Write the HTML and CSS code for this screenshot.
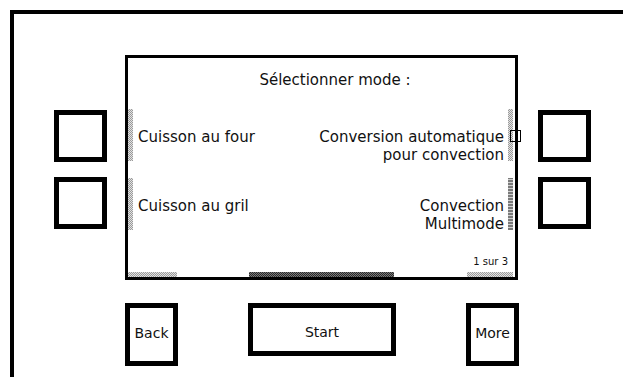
FILE: index.html
```html
<!DOCTYPE html>
<html lang="fr">
<head>
<meta charset="utf-8">
<title>Sélectionner mode</title>
<link rel="stylesheet" href="styles.css">
</head>
<body>
<div class="frame">
  <div class="main">
    <div class="side side-left">
      <div class="key"></div>
      <div class="key"></div>
    </div>
    <div class="screen">
      <div class="title">Sélectionner mode :</div>
      <div class="row row1">
        <div class="item left"><span class="bar"></span><span class="label">Cuisson au four</span></div>
        <div class="item right"><span class="label"><span class="tofu">Conversion automatique</span><br>pour convection</span><span class="bar"></span></div>
      </div>
      <div class="row row2">
        <div class="item left"><span class="bar"></span><span class="label">Cuisson au gril</span></div>
        <div class="item right"><span class="label">Convection<br>Multimode</span><span class="bar bar-dark"></span></div>
      </div>
      <div class="footer">
        <div class="page">1 sur 3</div>
        <div class="bars">
          <span class="hbar b1"></span>
          <span class="hbar b2"></span>
          <span class="hbar b3"></span>
        </div>
      </div>
    </div>
    <div class="side side-right">
      <div class="key"></div>
      <div class="key"></div>
    </div>
  </div>
  <div class="buttons">
    <div class="btn btn-small">Back</div>
    <div class="btn btn-wide">Start</div>
    <div class="btn btn-small">More</div>
  </div>
</div>
</body>
</html>
```

FILE: styles.css
```css
html, body {
  margin: 0;
  padding: 0;
}

body {
  width: 623px;
  height: 377px;
  overflow: hidden;
  background: #fff;
  color: #111;
  font-family: "DejaVu Sans", "Liberation Sans", sans-serif;
}

.frame {
  margin: 10px 0 0 10px;
  width: 613px;
  height: 367px;
  border-top: 4px solid #000;
  border-left: 4px solid #000;
  box-sizing: border-box;
}

.main {
  display: flex;
  align-items: flex-start;
  margin-top: 41px;
  padding-left: 40px;
}

.side {
  display: flex;
  flex-direction: column;
  gap: 15px;
  padding-top: 55px;
  width: 53px;
}

.side-left {
  margin-right: 18px;
}

.side-right {
  margin-left: 20px;
}

.key {
  height: 52px;
  border: 5px solid #000;
  box-sizing: border-box;
}

.screen {
  width: 393px;
  height: 225px;
  border: 3px solid #000;
  box-sizing: border-box;
  display: flex;
  flex-direction: column;
}

.title {
  margin-top: 13px;
  padding-left: 27px;
  font-size: 15px;
  line-height: 18px;
  text-align: center;
}

.row {
  display: flex;
  justify-content: space-between;
  height: 52px;
}

.row1 {
  margin-top: 20px;
}

.row2 {
  margin-top: 17px;
}

.item {
  display: flex;
  height: 100%;
  font-size: 15px;
  line-height: 18px;
}

.item .label {
  padding-top: 19px;
  white-space: nowrap;
}

.item.left .label {
  margin-left: 5px;
}

.item.right {
  padding-right: 2px;
}

.item.right .label {
  text-align: right;
  margin-right: 4px;
}

.bar {
  width: 5px;
  height: 100%;
  background: repeating-conic-gradient(#9a9a9a 0 25%, #e2e2e2 0 50%) 0 0 / 2px 2px;
}

.bar-dark {
  background: repeating-linear-gradient(0deg, #7a7a7a 0 2px, #d0d0d0 2px 3px);
}

.tofu {
  position: relative;
}

.tofu::after {
  content: "";
  position: absolute;
  left: calc(100% + 6px);
  top: 2px;
  width: 11px;
  height: 12px;
  border: 1px solid #000;
  box-sizing: border-box;
}

.footer {
  margin-top: auto;
}

.page {
  font-size: 10px;
  line-height: 12px;
  text-align: right;
  padding-right: 7px;
}

.bars {
  display: flex;
  height: 5px;
  margin-top: 4px;
}

.hbar {
  height: 100%;
  background: repeating-conic-gradient(#9a9a9a 0 25%, #e2e2e2 0 50%) 0 0 / 2px 2px;
}

.b1 {
  width: 49px;
}

.b2 {
  width: 145px;
  margin-left: 72px;
  background: repeating-conic-gradient(#2a2a2a 0 25%, #7a7a7a 0 50%) 0 0 / 2px 2px;
}

.b3 {
  width: 46px;
  margin-left: 73px;
}

.buttons {
  display: flex;
  align-items: flex-start;
  gap: 70px;
  margin-top: 23px;
  padding-left: 111px;
}

.btn {
  border: 5px solid #000;
  box-sizing: border-box;
  display: flex;
  align-items: center;
  justify-content: center;
  font-size: 14px;
}

.btn-small {
  width: 53px;
  height: 63px;
  padding-bottom: 4px;
}

.btn-wide {
  width: 148px;
  height: 53px;
  padding-top: 4px;
}
```
